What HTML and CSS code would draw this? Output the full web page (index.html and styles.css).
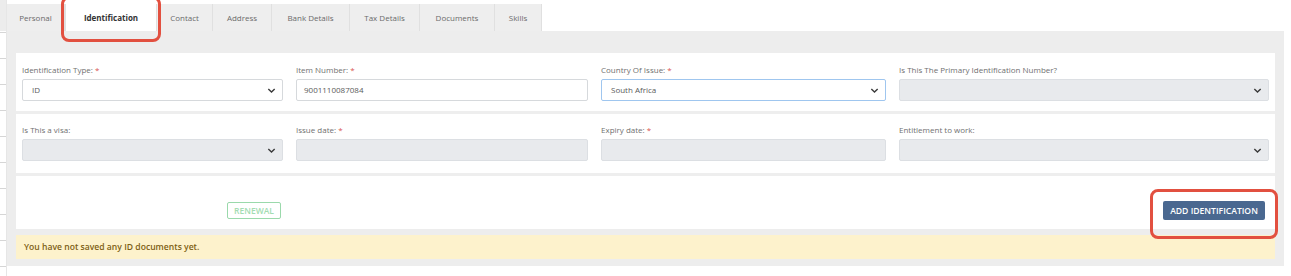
FILE: index.html
```html
<!DOCTYPE html>
<html>
<head>
<meta charset="utf-8">
<link rel="stylesheet" href="styles.css">
</head>
<body>
<div class="page">
  <div class="strip"></div>
  <div class="main">
    <div class="tabs">
      <div class="tab">Personal</div>
      <div class="tab active">Identification</div>
      <div class="tab">Contact</div>
      <div class="tab">Address</div>
      <div class="tab">Bank Details</div>
      <div class="tab">Tax Details</div>
      <div class="tab">Documents</div>
      <div class="tab">Skills</div>
    </div>
    <div class="panel">
      <div class="card">
        <div class="row">
          <div class="field">
            <div class="label">Identification Type: <span class="req">*</span></div>
            <div class="control select">ID<svg class="chev" viewBox="0 0 10 6"><path d="M1.2 1.2l3.8 3.6 3.8-3.6"/></svg></div>
          </div>
          <div class="field">
            <div class="label">Item Number: <span class="req">*</span></div>
            <div class="control">9001110087084</div>
          </div>
          <div class="field">
            <div class="label">Country Of Issue: <span class="req">*</span></div>
            <div class="control select focus">South Africa<svg class="chev" viewBox="0 0 10 6"><path d="M1.2 1.2l3.8 3.6 3.8-3.6"/></svg></div>
          </div>
          <div class="field">
            <div class="label">Is This The Primary Identification Number?</div>
            <div class="control select disabled"><svg class="chev" viewBox="0 0 10 6"><path d="M1.2 1.2l3.8 3.6 3.8-3.6"/></svg></div>
          </div>
        </div>
        <div class="row">
          <div class="field">
            <div class="label">Is This a visa:</div>
            <div class="control select disabled"><svg class="chev" viewBox="0 0 10 6"><path d="M1.2 1.2l3.8 3.6 3.8-3.6"/></svg></div>
          </div>
          <div class="field">
            <div class="label">Issue date: <span class="req">*</span></div>
            <div class="control disabled"></div>
          </div>
          <div class="field">
            <div class="label">Expiry date: <span class="req">*</span></div>
            <div class="control disabled"></div>
          </div>
          <div class="field">
            <div class="label">Entitlement to work:</div>
            <div class="control select disabled"><svg class="chev" viewBox="0 0 10 6"><path d="M1.2 1.2l3.8 3.6 3.8-3.6"/></svg></div>
          </div>
        </div>
        <div class="actions">
          <button class="btn-renewal">RENEWAL</button>
          <button class="btn-add">ADD IDENTIFICATION</button>
        </div>
      </div>
      <div class="alert">You have not saved any ID documents yet.</div>
    </div>
  </div>
  <div class="mark mark-tab"></div>
  <div class="mark mark-btn"></div>
</div>
</body>
</html>
```
FILE: styles.css
```css
* { box-sizing: border-box; }
html, body { margin: 0; padding: 0; background: #fff; }
body {
  font-family: "Open Sans", "Liberation Sans", sans-serif;
  font-size: 8px;
  color: #666;
  width: 1291px;
  height: 276px;
  overflow: hidden;
}
.page {
  position: relative;
  display: flex;
  height: 276px;
}
.strip {
  width: 7px;
  flex: none;
  background:
    linear-gradient(#ececec, #ececec) top / 100% 31px no-repeat,
    repeating-linear-gradient(to bottom, transparent 0, transparent 25px, #d6d6d6 25px, #d6d6d6 26px) 0 7px / 100% 100% no-repeat,
    #fff;
  border-right: 1px solid #e6e6e6;
}
.main {
  width: 1277px;
  flex: none;
}
.tabs {
  display: flex;
  height: 31px;
  padding-top: 4px;
}
.tab {
  height: 27px;
  display: flex;
  align-items: center;
  justify-content: center;
  background: #eeeeee;
  border-right: 1px solid #e0e0e0;
  color: #6b6b6b;
  font-size: 8px;
}
.tab:nth-child(1) { width: 58px; }
.tab:nth-child(2) { width: 92px; }
.tab:nth-child(3) { width: 56px; }
.tab:nth-child(4) { width: 59px; }
.tab:nth-child(5) { width: 78px; }
.tab:nth-child(6) { width: 70px; }
.tab:nth-child(7) { width: 75px; }
.tab:nth-child(8) { width: 47px; }
.tab.active {
  background: #fff;
  color: #333;
  font-weight: 700;
  border-right: 1px solid #e0e0e0;
  border-left: 1px solid #e0e0e0;
}
.panel {
  background: #ededed;
  height: 235px;
  padding: 22px 9px 0 9px;
}
.card {
  background: #fff;
}
.row {
  display: flex;
  justify-content: space-between;
  padding: 12px 6px 10px 6px;
  border-bottom: 3px solid #eeeeee;
}
.row + .row { padding-top: 11px; padding-bottom: 12px; }
.field:nth-child(1) { width: 261px; }
.field:nth-child(2) { width: 292px; }
.field:nth-child(3) { width: 285px; }
.field:nth-child(4) { width: 370px; }
.label {
  height: 10px;
  line-height: 10px;
  margin-bottom: 4px;
  color: #707070;
  font-size: 8px;
}
.req { color: #d9534f; }
.control {
  position: relative;
  height: 22px;
  border: 1px solid #d6d9dc;
  border-radius: 2px;
  background: #fff;
  padding: 0 7px;
  line-height: 20px;
  color: #5a5a5a;
  font-size: 8px;
}
.control.select { padding-left: 9px; }
.control.focus { border-color: #9fc6ef; }
.control.disabled { background: #e8eaed; border-color: #dcdfe3; }
.chev {
  position: absolute;
  right: 6px;
  top: 8px;
  width: 9px;
  height: 5px;
  fill: none;
  stroke: #3a3a3a;
  stroke-width: 1.7;
}
.actions {
  height: 53px;
  display: flex;
  align-items: flex-end;
  justify-content: space-between;
  padding: 0 10px 9px 211px;
}
.btn-renewal {
  font-family: "Open Sans", "Liberation Sans", sans-serif;
  font-size: 8.5px;
  font-weight: 600;
  height: 17px;
  width: 54px;
  padding: 0;
  margin-bottom: 1px;
  background: #fff;
  color: #a3dcb2;
  border: 1px solid #9ad9ab;
  border-radius: 2px;
}
.btn-add {
  font-family: "Open Sans", "Liberation Sans", sans-serif;
  font-size: 8.6px;
  font-weight: 600;
  height: 19px;
  width: 102px;
  padding: 0;
  background: #4a6890;
  color: #fff;
  border: none;
  border-radius: 2px;
}
.alert {
  margin-top: 6px;
  height: 24px;
  background: #fdf2cc;
  color: #7d5f14;
  font-weight: 600;
  font-size: 8.6px;
  line-height: 24px;
  padding-left: 8px;
}
.mark {
  position: absolute;
  border: 3px solid #e25040;
  border-radius: 8px;
}
.mark-tab { left: 61px; top: -4px; width: 100px; height: 46px; }
.mark-btn { left: 1150px; top: 189px; width: 128px; height: 50px; }
```
